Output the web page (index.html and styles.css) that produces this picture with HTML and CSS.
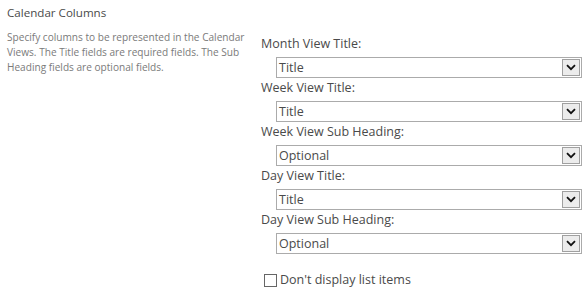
FILE: index.html
```html
<!DOCTYPE html>
<html>
<head>
<meta charset="utf-8">
<link rel="stylesheet" href="styles.css">
</head>
<body>
<div class="section">
  <div class="desc-col">
    <div class="heading">Calendar Columns</div>
    <div class="desc">Specify columns to be represented in the Calendar Views. The Title fields are required fields. The Sub Heading fields are optional fields.</div>
  </div>
  <div class="fields">
    <div class="label">Month View Title:</div>
    <div class="select"><span class="value">Title</span><span class="btn"><svg width="10" height="7" viewBox="0 0 10 7"><path d="M1 1.2 L5 5.2 L9 1.2" fill="none" stroke="#111" stroke-width="1.8"/></svg></span></div>
    <div class="label">Week View Title:</div>
    <div class="select"><span class="value">Title</span><span class="btn"><svg width="10" height="7" viewBox="0 0 10 7"><path d="M1 1.2 L5 5.2 L9 1.2" fill="none" stroke="#111" stroke-width="1.8"/></svg></span></div>
    <div class="label">Week View Sub Heading:</div>
    <div class="select"><span class="value">Optional</span><span class="btn"><svg width="10" height="7" viewBox="0 0 10 7"><path d="M1 1.2 L5 5.2 L9 1.2" fill="none" stroke="#111" stroke-width="1.8"/></svg></span></div>
    <div class="label">Day View Title:</div>
    <div class="select"><span class="value">Title</span><span class="btn"><svg width="10" height="7" viewBox="0 0 10 7"><path d="M1 1.2 L5 5.2 L9 1.2" fill="none" stroke="#111" stroke-width="1.8"/></svg></span></div>
    <div class="label">Day View Sub Heading:</div>
    <div class="select"><span class="value">Optional</span><span class="btn"><svg width="10" height="7" viewBox="0 0 10 7"><path d="M1 1.2 L5 5.2 L9 1.2" fill="none" stroke="#111" stroke-width="1.8"/></svg></span></div>
    <label class="check"><span class="box"></span><span>Don't display list items</span></label>
  </div>
</div>
</body>
</html>
```

FILE: styles.css
```css
html, body {
  margin: 0;
  padding: 0;
  background: #fff;
}
body {
  font-family: "Open Sans", "Noto Sans", sans-serif;
  color: #444;
}
.section {
  display: flex;
  padding-top: 4px;
}
.desc-col {
  width: 254px;
  padding-left: 7px;
  flex: none;
}
.heading {
  font-size: 11.6px;
  line-height: 18px;
  color: #4a4a4a;
}
.desc {
  margin-top: 8px;
  font-size: 10.1px;
  line-height: 15px;
  color: #7a7a7a;
}
.fields {
  padding-top: 30px;
  width: 321px;
}
.label {
  font-size: 12.5px;
  line-height: 20px;
  height: 20px;
  margin-bottom: 3px;
  color: #4a4a4a;
}
.select {
  margin-left: 15px;
  height: 21px;
  box-sizing: border-box;
  border: 1px solid #ababab;
  display: flex;
  align-items: stretch;
}
.value {
  flex: 1;
  font-size: 12.5px;
  line-height: 19px;
  padding-left: 2px;
  color: #4a4a4a;
}
.btn {
  width: 18px;
  margin: 1px;
  box-sizing: border-box;
  border: 1px solid #a0a0a0;
  background: #ececec;
  display: flex;
  align-items: center;
  justify-content: center;
}
.check {
  display: flex;
  align-items: center;
  margin-top: 17px;
  margin-left: 3px;
  font-size: 12.5px;
  line-height: 18px;
  color: #4a4a4a;
}
.box {
  width: 13px;
  height: 13px;
  box-sizing: border-box;
  border: 1px solid #666;
  margin-right: 3px;
}
```
